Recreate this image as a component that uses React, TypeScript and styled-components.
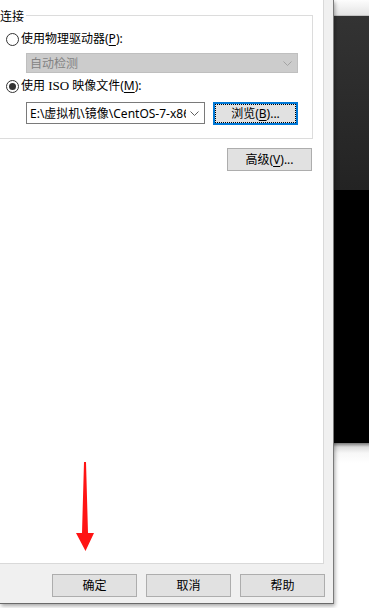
import React from "react";
import styled, { createGlobalStyle } from "styled-components";

const GlobalStyle = createGlobalStyle`
  html, body {
    margin: 0;
    padding: 0;
  }
  body {
    width: 369px;
    height: 608px;
    overflow: hidden;
    background: #fff;
    font-family: "Noto Sans", "Noto Sans CJK SC", sans-serif;
    font-size: 12px;
    color: #000;
  }
  * {
    box-sizing: border-box;
  }
`;

const Chevron = ({ color }: { color: string }) => (
  <svg width="9" height="5" viewBox="0 0 9 5">
    <polyline points="0.5,0.5 4.5,4.5 8.5,0.5" fill="none" stroke={color} strokeWidth="1" />
  </svg>
);

const Key = ({ children }: { children: string }) => <S.Key>{children}</S.Key>;

export default function App() {
  return (
    <>
      <GlobalStyle />
      <S.Screen>
        <S.Dialog>
          <S.Panel>
            <S.Group>
              <S.Legend>连接</S.Legend>
              <S.GroupBody>
                <S.RadioRow $top={0}>
                  <S.Radio />
                  <span>
                    使用物理驱动器(<Key>P</Key>):
                  </span>
                </S.RadioRow>
                <S.Combo $disabled>
                  <S.ComboText>自动检测</S.ComboText>
                  <Chevron color="#a3a3a3" />
                </S.Combo>
                <S.RadioRow $top={5}>
                  <S.Radio $checked />
                  <span>
                    使用 <S.Latin>ISO</S.Latin> 映像文件(<Key>M</Key>):
                  </span>
                </S.RadioRow>
                <S.PathRow>
                  <S.Combo>
                    <S.ComboText>E:\虚拟机\镜像\CentOS-7-x86_64-DVD-1908.iso</S.ComboText>
                    <Chevron color="#5f5f5f" />
                  </S.Combo>
                  <S.Button $focused>
                    浏览(<Key>B</Key>)...
                  </S.Button>
                </S.PathRow>
              </S.GroupBody>
            </S.Group>
            <S.AdvancedRow>
              <S.Button>
                高级(<Key>V</Key>)...
              </S.Button>
            </S.AdvancedRow>
          </S.Panel>
          <S.Footer>
            <S.Button>确定</S.Button>
            <S.Button>取消</S.Button>
            <S.Button>帮助</S.Button>
          </S.Footer>
          <S.Arrow width="18" height="90" viewBox="0 0 18 90">
            <path d="M8 0 L10 0 L12 71 L18 71 L9.5 89 L0 71 L6 71 Z" fill="#ff1414" />
          </S.Arrow>
        </S.Dialog>
        <S.Backdrop>
          <S.TopStrip />
          <S.DarkBar />
          <S.Display />
          <S.Desk />
        </S.Backdrop>
      </S.Screen>
    </>
  );
}

const S = {
  Screen: styled.div`
    display: flex;
    width: 369px;
    height: 608px;
    overflow: hidden;
  `,
  //
  Dialog: styled.div`
    position: relative;
    z-index: 1;
    display: flex;
    flex-direction: column;
    flex-shrink: 0;
    width: 334px;
    height: 604px;
    background: #f0f0f0;
    border-right: 1px solid #7a7a7a;
    border-bottom: 1px solid #6a6a6a;
    box-shadow: 1px 2px 4px rgba(0, 0, 0, 0.35);
  `,
  Panel: styled.div`
    flex: 1;
    margin-right: 9px;
    background: #fff;
    border-right: 1px solid #d9d9d9;
    border-bottom: 1px solid #d9d9d9;
  `,
  //
  Group: styled.fieldset`
    margin: 7px 10px 0 -8px;
    padding: 0;
    min-width: 0;
    border: 1px solid #dcdcdc;
  `,
  Legend: styled.legend`
    padding: 0 2px 0 7px;
    line-height: 17px;
    font-family: "Noto Sans CJK SC", sans-serif;
  `,
  GroupBody: styled.div`
    display: flex;
    flex-direction: column;
    padding: 7px 14px 13px 13px;
  `,
  RadioRow: styled.div<{ $top: number }>`
    display: flex;
    align-items: center;
    gap: 2px;
    height: 16px;
    margin-top: ${(p) => p.$top}px;
    line-height: 16px;
    white-space: nowrap;
  `,
  Radio: styled.span<{ $checked?: boolean }>`
    position: relative;
    flex-shrink: 0;
    width: 13px;
    height: 13px;
    border: 1px solid #333;
    border-radius: 50%;
    background: #fff;

    &::after {
      content: "";
      display: ${(p) => (p.$checked ? "block" : "none")};
      position: absolute;
      inset: 2px;
      border-radius: 50%;
      background: #333;
    }
  `,
  Latin: styled.span`
    font-family: "Liberation Serif", serif;
    font-size: 13px;
  `,
  Key: styled.u`
    text-underline-offset: 2px;
  `,
  //
  Combo: styled.div<{ $disabled?: boolean }>`
    display: flex;
    align-items: center;
    flex: 1;
    min-width: 0;
    height: 22px;
    margin: ${(p) => (p.$disabled ? "6px 0 0 20px" : "0")};
    padding: 0 5px 0 3px;
    border: 1px solid ${(p) => (p.$disabled ? "#bfbfbf" : "#7a7a7a")};
    background: ${(p) => (p.$disabled ? "#cccccc" : "#fff")};
    color: ${(p) => (p.$disabled ? "#838383" : "#000")};
  `,
  ComboText: styled.span`
    flex: 1;
    min-width: 0;
    overflow: hidden;
    white-space: nowrap;
    margin-right: 4px;
  `,
  PathRow: styled.div`
    display: flex;
    gap: 8px;
    margin: 8px 0 0 20px;
  `,
  //
  Button: styled.button<{ $focused?: boolean }>`
    position: relative;
    flex-shrink: 0;
    width: 85px;
    height: 23px;
    padding: 0;
    border: ${(p) => (p.$focused ? "2px solid #0078d7" : "1px solid #adadad")};
    background: #e1e1e1;
    font: inherit;
    color: #000;
    line-height: 19px;

    &::after {
      content: "";
      display: ${(p) => (p.$focused ? "block" : "none")};
      position: absolute;
      inset: 0;
      border: 1px dotted #000;
    }
  `,
  AdvancedRow: styled.div`
    display: flex;
    justify-content: flex-end;
    margin-top: 9px;
    padding-right: 11px;
  `,
  Footer: styled.div`
    display: flex;
    justify-content: flex-end;
    gap: 9px;
    height: 39px;
    padding: 10px 8px 0 0;
  `,
  Arrow: styled.svg`
    position: absolute;
    left: 76px;
    top: 462px;
  `,
  //
  Backdrop: styled.div`
    flex: 1;
    display: flex;
    flex-direction: column;
  `,
  TopStrip: styled.div`
    height: 16px;
    background: linear-gradient(to bottom, #fdfdfd, #e4e4e4);
    border-bottom: 1px solid #c4c4c4;
  `,
  DarkBar: styled.div`
    height: 174px;
    background: linear-gradient(to bottom, #333333, #232323);
  `,
  Display: styled.div`
    height: 253px;
    background: #000;
  `,
  Desk: styled.div`
    flex: 1;
    background: linear-gradient(to bottom, #7a7a7a 0, #dcdcdc 4px, #f7f7f7 10px, #fff 20px);
  `,
};
